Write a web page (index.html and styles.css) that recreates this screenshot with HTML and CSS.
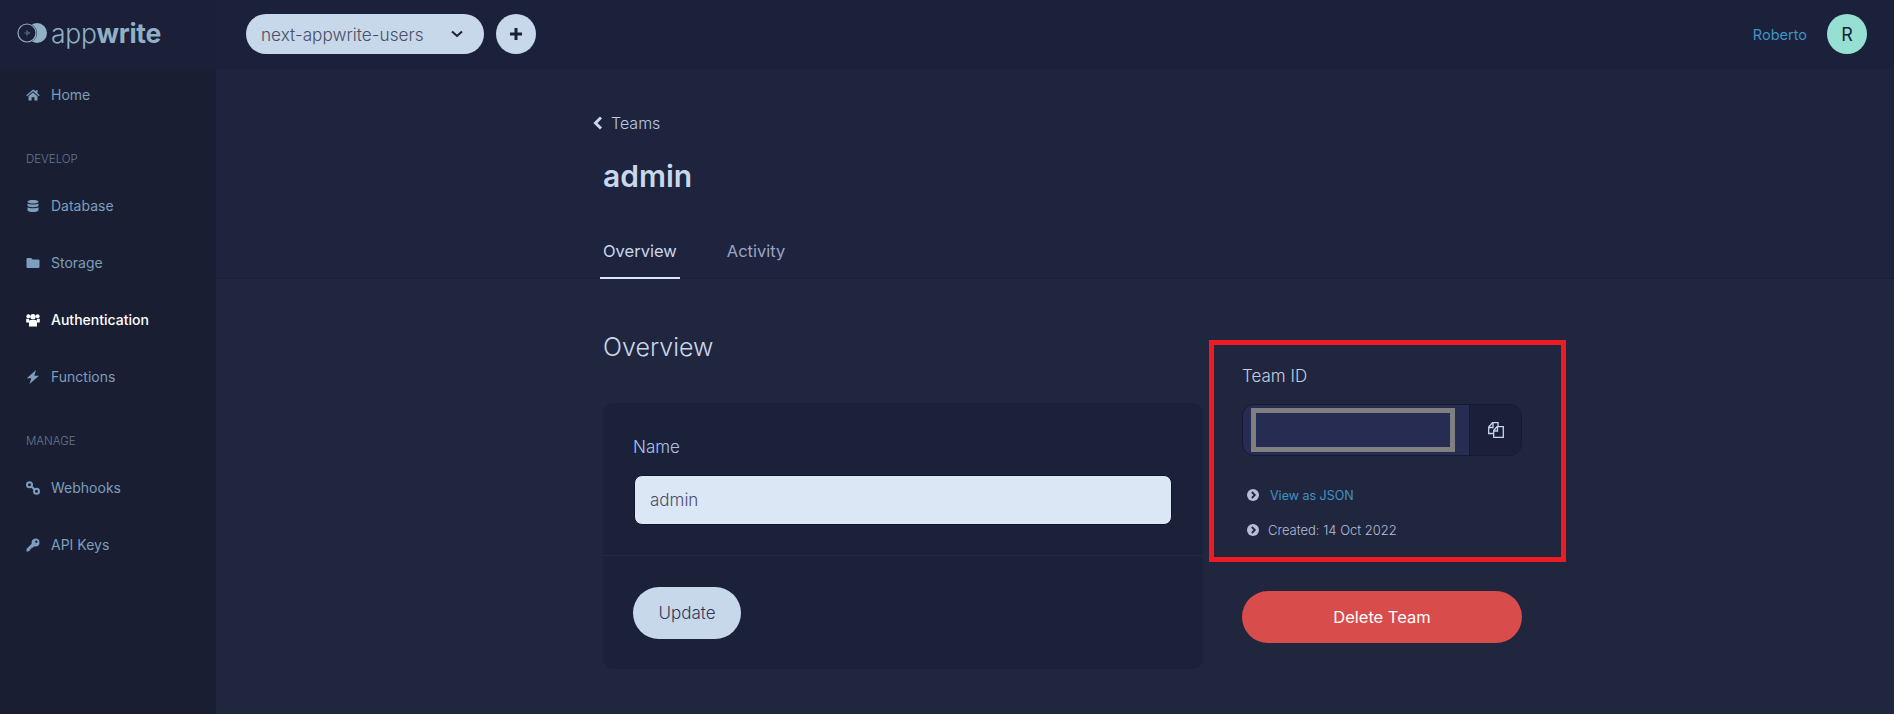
FILE: index.html
```html
<!DOCTYPE html>
<html lang="en">
<head>
    <meta charset="UTF-8">
    <meta name="viewport" content="width=device-width, initial-scale=1.0">
    <title>admin - Teams</title>
    <link rel="stylesheet" href="styles.css">
</head>
<body>
    <aside class="sidebar">
        <div class="logo">
            <svg class="logo-mark" viewBox="0 0 30 20" width="30" height="20">
                <circle cx="20" cy="10" r="10" fill="#8fb0c6"/>
                <circle cx="10" cy="10" r="10" fill="#1b2038"/>
                <circle cx="10" cy="10" r="9" fill="#1b2038" stroke="#8fb0c6" stroke-width="1.200"/>
                <path d="M7.500 10h1M10 7.500v5M12 9v2" stroke="#8fb0c6" stroke-width="0.800" fill="none"/>
            </svg>
            <span class="logo-text">app<b>write</b></span>
        </div>
        <nav class="nav">
            <a class="nav-item">
                <svg class="nav-icon" viewBox="0 0 14 14"><path d="M7 1.500 0.300 7.200l0.900 1L7 3.300l5.800 4.900 0.900-1-2.200-1.900V2H10.200v1.200z M2.500 8.200 7 4.400l4.500 3.800v4.300H8.400V9.300H5.600v3.200H2.500z"/></svg>
                Home
            </a>
            <div class="nav-label">DEVELOP</div>
            <a class="nav-item">
                <svg class="nav-icon" viewBox="0 0 14 14"><path d="M1.500 2.800C1.500 1.600 4 1 7 1s5.500 0.600 5.500 1.800S10 4.600 7 4.600 1.500 4 1.500 2.800z M1.500 4.500C2.800 5.300 4.800 5.600 7 5.600s4.200-0.300 5.500-1.100v2C12.500 7.600 10 8.200 7 8.200S1.500 7.600 1.500 6.500z M1.500 8.200C2.800 9 4.800 9.300 7 9.300s4.200-0.300 5.500-1.100v3C12.500 12.400 10 13 7 13s-5.500-0.600-5.500-1.800z"/></svg>
                Database
            </a>
            <a class="nav-item">
                <svg class="nav-icon" viewBox="0 0 14 14"><path d="M0.500 3.300C0.500 2.500 1 2 1.800 2h3.400l1.400 1.500h5.600c0.800 0 1.300 0.500 1.300 1.300v6c0 0.800-0.500 1.200-1.300 1.200H1.800C1 12 0.500 11.600 0.500 10.800z"/></svg>
                Storage
            </a>
            <a class="nav-item active">
                <svg class="nav-icon" viewBox="0 0 14 14"><circle cx="2.400" cy="3.200" r="2"/><circle cx="11.600" cy="3.200" r="2"/><circle cx="7" cy="3.700" r="2.700"/><path d="M0.200 5.800h3L3 9.400H0.200z M13.800 5.800h-3l0.200 3.600h2.800z M3.900 7h6.200l0.900 1.300v5.200H3V8.300z"/></svg>
                Authentication
            </a>
            <a class="nav-item">
                <svg class="nav-icon" viewBox="0 0 14 14"><path d="M10 0 0.800 8.200h4.500L3.500 14 13 5.700H8.300z"/></svg>
                Functions
            </a>
            <div class="nav-label">MANAGE</div>
            <a class="nav-item">
                <svg class="nav-icon icon-line" viewBox="0 0 14 14"><circle cx="3.500" cy="3.700" r="2.500"/><circle cx="10.500" cy="10.300" r="2.500"/><path d="M5.500 5.500 8.500 8.500"/></svg>
                Webhooks
            </a>
            <a class="nav-item">
                <svg class="nav-icon" viewBox="0 0 14 14"><path d="M9.500 0.500a4 4 0 0 1 0 8c-0.500 0-1-0.100-1.400-0.200L6.800 9.700H5.300v1.500H3.800v1.500L1.800 13.500H0.500v-2.600l5.200-5.100A4 4 0 0 1 9.500 0.500z M10.300 2.500a1.200 1.200 0 1 0 0.010 0z" fill-rule="evenodd"/></svg>
                API Keys
            </a>
        </nav>
    </aside>

    <div class="main">
        <header class="topbar">
            <div class="project-select">
                <span>next-appwrite-users</span>
                <svg viewBox="0 0 12 8" width="12" height="8"><path d="M1 1.500 6 6l5-4.500" fill="none" stroke="#1b2038" stroke-width="2"/></svg>
            </div>
            <div class="add-btn">
                <svg viewBox="0 0 12 12" width="12" height="12"><path d="M6 0v12M0 6h12" stroke="#1b2038" stroke-width="3"/></svg>
            </div>
            <div class="user">
                <span class="user-name">Roberto</span>
                <span class="avatar">R</span>
            </div>
        </header>

        <section class="page-head">
            <a class="back-link">
                <svg viewBox="0 0 10 14" width="10" height="14"><path d="M8 1.500 2.500 7 8 12.500" fill="none" stroke="#c7d8eb" stroke-width="3"/></svg>
                Teams
            </a>
            <h1>admin</h1>
            <div class="tabs">
                <a class="tab active">Overview</a>
                <a class="tab">Activity</a>
            </div>
        </section>

        <section class="content">
            <div class="left-col">
                <h2>Overview</h2>
                <form class="card">
                    <div class="card-body">
                        <label for="team_name">Name</label>
                        <input type="text" id="team_name" value="admin">
                    </div>
                    <div class="card-foot">
                        <button type="button" class="update-btn">Update</button>
                    </div>
                </form>
            </div>
            <div class="right-col">
                <div class="info-box">
                    <div class="info-title">Team ID</div>
                    <div class="id-group">
                        <div class="id-value"><div class="redacted"></div></div>
                        <div class="id-copy">
                            <svg viewBox="0 0 16 16" width="16" height="16" fill="none" stroke="#c7d8eb" stroke-width="1.300"><path d="M5.500 11.500H0.700V5L4.500 0.700H10V4.500"/><path d="M0.700 5.500H5V1"/><path d="M5.700 8.500 9 4.700H15.300V15.300H5.700z"/><path d="M5.700 9H9.500V5"/></svg>
                        </div>
                    </div>
                    <ul class="meta">
                        <li class="meta-json">
                            <svg viewBox="0 0 12 12" width="12" height="12"><circle cx="6" cy="6" r="6" fill="#b6bdd6"/><path d="M4.800 3 7.800 6 4.800 9" fill="none" stroke="#20253f" stroke-width="1.800"/></svg>
                            <a>View as JSON</a>
                        </li>
                        <li class="meta-date">
                            <svg viewBox="0 0 12 12" width="12" height="12"><circle cx="6" cy="6" r="6" fill="#b6bdd6"/><path d="M4.800 3 7.800 6 4.800 9" fill="none" stroke="#20253f" stroke-width="1.800"/></svg>
                            Created: 14 Oct 2022
                        </li>
                    </ul>
                </div>
                <button type="button" class="delete-btn">Delete Team</button>
            </div>
        </section>
    </div>
</body>
</html>
```

FILE: styles.css
```css
html, body {
    height: 100%;
}
body {
    font-family: Inter, "Open Sans", sans-serif;
    background-color: #21263f;
    color: #c7d8eb;
    margin: 0;
    display: flex;
    overflow: hidden;
}
.sidebar {
    width: 216px;
    flex-shrink: 0;
    background-color: #191e32;
}
.logo {
    height: 69px;
    box-sizing: border-box;
    padding: 0 0 3px 17px;
    background-color: #1b2038;
    display: flex;
    align-items: center;
    gap: 4px;
}
.logo-text {
    font-size: 26.500px;
    font-weight: 300;
    color: #8fb0c6;
    letter-spacing: -0.3px;
}
.logo-text b {
    font-weight: 700;
}
.nav {
    margin-top: -3px;
}
.nav-item {
    height: 57px;
    padding-left: 26px;
    display: flex;
    align-items: center;
    font-size: 14px;
    color: #7c9fbd;
}
.nav-item.active {
    color: #fff;
    font-weight: 500;
}
.nav-icon {
    width: 14px;
    height: 14px;
    margin-right: 11px;
    fill: #7c9fbd;
}
.nav-item.active .nav-icon {
    fill: #fff;
}
.icon-line {
    fill: none;
    stroke: #7c9fbd;
    stroke-width: 2;
}
.nav-label {
    height: 54px;
    padding: 29px 0 0 26px;
    box-sizing: border-box;
    font-size: 11.500px;
    font-weight: 300;
    color: #64798f;
}
.main {
    flex: 1;
    min-width: 0;
}
.topbar {
    height: 69px;
    padding: 0 27px 1px 30px;
    box-sizing: border-box;
    background-color: #1b213a;
    display: flex;
    align-items: center;
    gap: 12px;
}
.project-select {
    width: 238px;
    height: 40px;
    padding: 0 21px 0 15px;
    box-sizing: border-box;
    border-radius: 20px;
    background-color: #c7d8eb;
    color: #4a4f66;
    font-size: 17.200px;
    font-weight: 300;
    display: flex;
    align-items: center;
    justify-content: space-between;
}
.add-btn {
    width: 40px;
    height: 40px;
    border-radius: 50%;
    background-color: #c7d8eb;
    display: flex;
    align-items: center;
    justify-content: center;
}
.user {
    margin-left: auto;
    display: flex;
    align-items: center;
    gap: 20px;
}
.user-name {
    font-size: 14.500px;
    color: #3f94c4;
}
.avatar {
    width: 40px;
    height: 40px;
    border-radius: 50%;
    background-color: #95e0d3;
    color: #1b2038;
    font-size: 18px;
    display: flex;
    align-items: center;
    justify-content: center;
}
.page-head {
    height: 210px;
    box-sizing: border-box;
    padding: 43px 0 0 377px;
    background-color: #1e233e;
    border-bottom: 1px solid #1a2039;
}
.back-link {
    display: flex;
    align-items: center;
    gap: 8px;
    font-size: 16px;
    font-weight: 300;
    color: #b9cbe2;
    height: 22px;
}
h1 {
    margin: 20px 0 0 10px;
    height: 44px;
    line-height: 44px;
    font-size: 30px;
    font-weight: 600;
    color: #c7d8eb;
}
.tabs {
    margin: 42px 0 0 7px;
    display: flex;
    gap: 44px;
}
.tab {
    padding: 0 3px 15px;
    font-size: 16.500px;
    color: #9aa6c4;
    line-height: 22px;
}
.tab.active {
    color: #c7d8eb;
    border-bottom: 2px solid #dbe7f5;
}
.content {
    padding: 0 0 0 387px;
    display: flex;
    gap: 39px;
}
.left-col {
    width: 600px;
}
h2 {
    margin: 52px 0 0 0;
    height: 32px;
    line-height: 32px;
    font-size: 25px;
    font-weight: 300;
    color: #c7d8eb;
}
.card {
    margin-top: 40px;
    height: 266px;
    border-radius: 10px;
    background-color: #1c213a;
}
.card-body {
    height: 153px;
    box-sizing: border-box;
    padding: 33px 30px 0;
    border-bottom: 1px solid #232a48;
}
label {
    display: block;
    height: 22px;
    line-height: 22px;
    font-size: 17px;
    font-weight: 300;
    color: #a9c4ec;
}
input {
    display: block;
    width: 538px;
    height: 50px;
    margin: 17px 0 0 1px;
    padding: 0 15px;
    box-sizing: border-box;
    border: 1px solid #11152a;
    border-radius: 8px;
    background-color: #dbe7f5;
    color: #4a4e63;
    font-family: inherit;
    font-size: 17px;
    font-weight: 300;
}
.card-foot {
    padding: 31px 30px 0;
}
button {
    border: none;
    font-family: inherit;
    cursor: pointer;
}
.update-btn {
    width: 108px;
    height: 52px;
    border-radius: 26px;
    background-color: #c7d8eb;
    color: #33385a;
    font-size: 17px;
    font-weight: 300;
}
.right-col {
    width: 280px;
}
.info-box {
    width: 357px;
    height: 222px;
    margin: 61px 0 29px -33px;
    padding: 19px 0 0 28px;
    box-sizing: border-box;
    border: 5px solid #ed1c24;
}
.info-title {
    height: 24px;
    line-height: 24px;
    font-size: 17px;
    font-weight: 300;
    color: #c3cde0;
}
.id-group {
    width: 280px;
    height: 52px;
    margin-top: 16px;
    box-sizing: border-box;
    border: 1px solid #161a2e;
    border-radius: 12px;
    overflow: hidden;
    display: flex;
    background-color: #272d52;
}
.id-value {
    flex: 1;
    padding: 3px 0 0 8px;
}
.redacted {
    width: 204px;
    height: 44px;
    box-sizing: border-box;
    border: 5px solid #808080;
}
.id-copy {
    width: 51px;
    border-left: 1px solid #161a2e;
    background-color: #1b2038;
    display: flex;
    align-items: center;
    justify-content: center;
}
.meta {
    list-style: none;
    margin: 0;
    padding: 0;
    font-size: 12.500px;
}
.meta li {
    display: flex;
    align-items: center;
    padding-left: 5px;
}
.meta-json {
    margin-top: 29px;
    height: 20px;
    gap: 11px;
}
.meta-json a {
    color: #3f94c4;
}
.meta-date {
    margin-top: 15px;
    height: 20px;
    gap: 9px;
    color: #b6bdd6;
    font-size: 13px;
    font-weight: 300;
}
.delete-btn {
    display: block;
    width: 280px;
    height: 52px;
    border-radius: 26px;
    background-color: #d94c4c;
    color: #fff;
    font-size: 16.500px;
}
```
